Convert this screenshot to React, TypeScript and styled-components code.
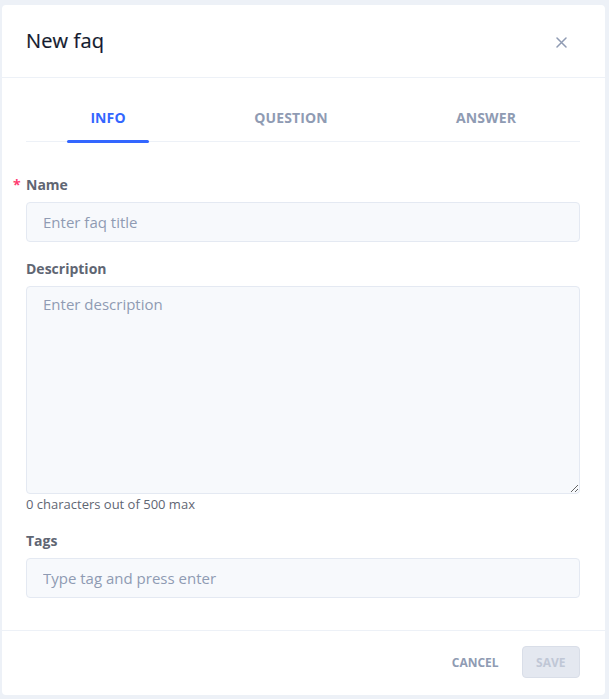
import React, { useState } from "react";
import styled, { createGlobalStyle } from "styled-components";

const Global = createGlobalStyle`
  html, body { margin: 0; padding: 0; background: #edf1f7; }
  body { font-family: "Open Sans", "Noto Sans", sans-serif; -webkit-font-smoothing: antialiased; }
  * { box-sizing: border-box; }
`;

const Page = styled.div`
  width: 609px;
  height: 699px;
  padding: 5px 4px 4px 2px;
  background: #edf1f7;
`;

const Card = styled.div`
  width: 603px;
  height: 690px;
  background: #ffffff;
  border-radius: 4px;
  display: flex;
  flex-direction: column;
`;

const Header = styled.div`
  height: 73px;
  flex-shrink: 0;
  padding: 0 37px 0 24px;
  display: flex;
  align-items: center;
  justify-content: space-between;
  border-bottom: 1px solid #edf1f7;
`;

const Title = styled.h1`
  margin: 0;
  font-size: 20px;
  font-weight: 500;
  color: #131a2e;
  line-height: 28px;
  letter-spacing: 0.15px;
  -webkit-text-stroke: 0.2px #131a2e;
`;

const CloseBtn = styled.button`
  border: none;
  background: transparent;
  padding: 0;
  margin-top: 2px;
  width: 14px;
  height: 14px;
  display: flex;
  align-items: center;
  justify-content: center;
  cursor: pointer;
`;

const Body = styled.div`
  flex: 1;
  padding: 16px 25px 31px 24px;
  display: flex;
  flex-direction: column;
`;

const TabList = styled.div`
  display: grid;
  grid-template-columns: 164px 202px 1fr;
  height: 48px;
  border-bottom: 1px solid #edf1f7;
`;

const Tab = styled.button<{ $active?: boolean }>`
  position: relative;
  border: none;
  background: transparent;
  font-family: inherit;
  font-size: 14px;
  font-weight: 700;
  letter-spacing: 0.1px;
  color: ${(p) => (p.$active ? "#3366ff" : "#8f9bb3")};
  padding: 0 0 1px;
  cursor: pointer;
  &::after {
    content: "";
    display: ${(p) => (p.$active ? "block" : "none")};
    position: absolute;
    left: 41px;
    width: 82px;
    bottom: -2px;
    height: 3px;
    border-radius: 2px;
    background: #3366ff;
  }
`;

const Form = styled.div`
  padding-top: 33px;
  display: flex;
  flex-direction: column;
`;

const Field = styled.div<{ $gap?: number }>`
  display: flex;
  flex-direction: column;
  margin-bottom: ${(p) => p.$gap ?? 17}px;
`;

const Label = styled.label`
  position: relative;
  font-size: 14px;
  font-weight: 700;
  line-height: 20px;
  color: #5f6673;
  margin-bottom: 7px;
`;

const Required = styled.span`
  position: absolute;
  left: -13px;
  top: 0;
  color: #ff3d71;
  font-weight: 700;
`;

const Input = styled.input`
  height: 40px;
  width: 100%;
  border: 1px solid #e4e9f2;
  background: #f7f9fc;
  border-radius: 4px;
  padding: 0 16px;
  font-family: inherit;
  font-size: 15px;
  color: #222b45;
  outline: none;
  &::placeholder { color: #8f9bb3; }
`;

const TextArea = styled.textarea`
  height: 208px;
  width: 100%;
  border: 1px solid #e4e9f2;
  background: #f7f9fc;
  border-radius: 4px;
  padding: 6px 16px;
  font-family: inherit;
  font-size: 15px;
  line-height: 22px;
  color: #222b45;
  outline: none;
  resize: vertical;
  display: block;
  &::placeholder { color: #8f9bb3; }
`;

const Hint = styled.div`
  font-size: 13px;
  line-height: 16px;
  color: #5f6673;
  margin-top: 2px;
`;

const Footer = styled.div`
  height: 65px;
  flex-shrink: 0;
  border-top: 1px solid #edf1f7;
  display: flex;
  align-items: center;
  justify-content: flex-end;
  gap: 4px;
  padding: 0 25px 2px 0;
`;

const Button = styled.button<{ $variant: "ghost" | "disabled" }>`
  font-family: inherit;
  font-size: 12px;
  font-weight: 700;
  height: 32px;
  padding: 0 ${(p) => (p.$variant === "ghost" ? "18px" : "13.5px")};
  border-radius: 4px;
  border: 1px solid ${(p) => (p.$variant === "ghost" ? "transparent" : "#d9dee8")};
  background: ${(p) => (p.$variant === "ghost" ? "transparent" : "#e4e8f0")};
  color: ${(p) => (p.$variant === "ghost" ? "#8f9bb3" : "#c0c7d6")};
  cursor: ${(p) => (p.$variant === "ghost" ? "pointer" : "default")};
`;

export default function App() {
  const [active, setActive] = useState(0);
  const [desc, setDesc] = useState("");
  const tabs = ["INFO", "QUESTION", "ANSWER"];
  return (
    <>
      <Global />
      <Page>
        <Card>
          <Header>
            <Title>New faq</Title>
            <CloseBtn aria-label="close">
              <svg width="11" height="11" viewBox="0 0 11 11">
                <path d="M1 1 L10 10 M10 1 L1 10" stroke="#8f9bb3" strokeWidth="1.5" strokeLinecap="round" />
              </svg>
            </CloseBtn>
          </Header>
          <Body>
            <TabList>
              {tabs.map((t, i) => (
                <Tab key={t} $active={i === active} onClick={() => setActive(i)}>
                  {t}
                </Tab>
              ))}
            </TabList>
            <Form>
              <Field>
                <Label>
                  <Required>*</Required>Name
                </Label>
                <Input placeholder="Enter faq title" />
              </Field>
              <Field $gap={19}>
                <Label>Description</Label>
                <TextArea
                  placeholder="Enter description"
                  value={desc}
                  onChange={(e) => setDesc(e.target.value)}
                />
                <Hint>{desc.length} characters out of 500 max</Hint>
              </Field>
              <Field $gap={0}>
                <Label>Tags</Label>
                <Input placeholder="Type tag and press enter" />
              </Field>
            </Form>
          </Body>
          <Footer>
            <Button $variant="ghost">CANCEL</Button>
            <Button $variant="disabled" disabled>SAVE</Button>
          </Footer>
        </Card>
      </Page>
    </>
  );
}
